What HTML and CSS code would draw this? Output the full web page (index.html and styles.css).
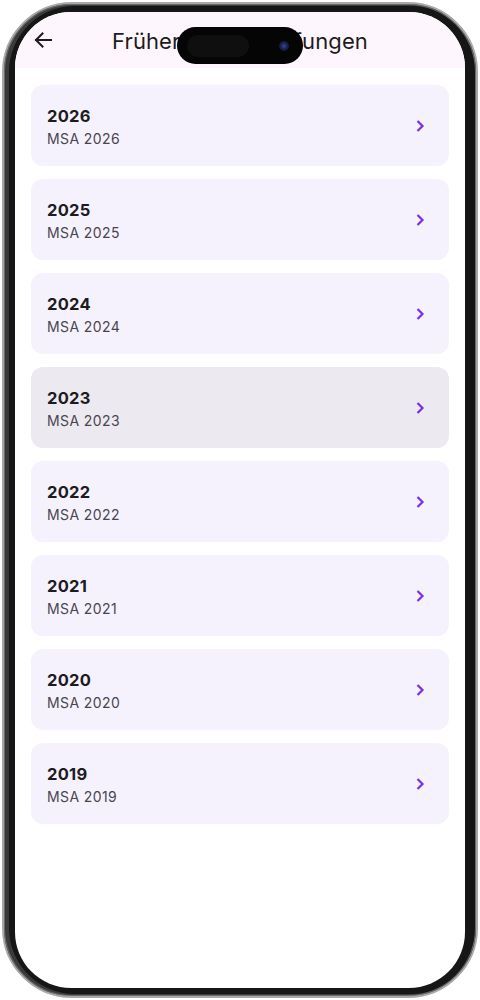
FILE: index.html
```html
<!DOCTYPE html>
<html lang="de">
<head>
<meta charset="utf-8">
<title>Frühere MSA-Prüfungen</title>
<link rel="stylesheet" href="styles.css">
</head>
<body>
<div class="phone">
  <div class="screen">
    <div class="island"><span class="island-dark"></span><span class="cam"></span></div>
    <header class="appbar">
      <span class="back">
        <svg width="20" height="20" viewBox="0 0 20 20"><path d="M18 10H3M9.5 3.5L3 10l6.5 6.5" fill="none" stroke="#1d1b20" stroke-width="2" stroke-linecap="square"/></svg>
      </span>
      <h1 class="title">Frühere MSA-Prüfungen</h1>
    </header>
    <ul class="list">
      <li class="card"><div class="txt"><span class="year">2026</span><span class="sub">MSA 2026</span></div><svg class="chev" width="10" height="14" viewBox="0 0 10 14"><path d="M2.5 2l5 5-5 5" fill="none" stroke="#7c2ee6" stroke-width="2.2"/></svg></li>
      <li class="card"><div class="txt"><span class="year">2025</span><span class="sub">MSA 2025</span></div><svg class="chev" width="10" height="14" viewBox="0 0 10 14"><path d="M2.5 2l5 5-5 5" fill="none" stroke="#7c2ee6" stroke-width="2.2"/></svg></li>
      <li class="card"><div class="txt"><span class="year">2024</span><span class="sub">MSA 2024</span></div><svg class="chev" width="10" height="14" viewBox="0 0 10 14"><path d="M2.5 2l5 5-5 5" fill="none" stroke="#7c2ee6" stroke-width="2.2"/></svg></li>
      <li class="card active"><div class="txt"><span class="year">2023</span><span class="sub">MSA 2023</span></div><svg class="chev" width="10" height="14" viewBox="0 0 10 14"><path d="M2.5 2l5 5-5 5" fill="none" stroke="#7c2ee6" stroke-width="2.2"/></svg></li>
      <li class="card"><div class="txt"><span class="year">2022</span><span class="sub">MSA 2022</span></div><svg class="chev" width="10" height="14" viewBox="0 0 10 14"><path d="M2.5 2l5 5-5 5" fill="none" stroke="#7c2ee6" stroke-width="2.2"/></svg></li>
      <li class="card"><div class="txt"><span class="year">2021</span><span class="sub">MSA 2021</span></div><svg class="chev" width="10" height="14" viewBox="0 0 10 14"><path d="M2.5 2l5 5-5 5" fill="none" stroke="#7c2ee6" stroke-width="2.2"/></svg></li>
      <li class="card"><div class="txt"><span class="year">2020</span><span class="sub">MSA 2020</span></div><svg class="chev" width="10" height="14" viewBox="0 0 10 14"><path d="M2.5 2l5 5-5 5" fill="none" stroke="#7c2ee6" stroke-width="2.2"/></svg></li>
      <li class="card"><div class="txt"><span class="year">2019</span><span class="sub">MSA 2019</span></div><svg class="chev" width="10" height="14" viewBox="0 0 10 14"><path d="M2.5 2l5 5-5 5" fill="none" stroke="#7c2ee6" stroke-width="2.2"/></svg></li>
    </ul>
  </div>
</div>
</body>
</html>
```
FILE: styles.css
```css
* { box-sizing: border-box; }
html, body { margin: 0; padding: 0; background: #ffffff; }
body { width: 480px; height: 1000px; padding: 2px; font-family: Inter, "Noto Sans", sans-serif; }

.phone {
  width: 476px;
  height: 996px;
  border-radius: 70px;
  background: #161616;
  padding: 8px 11px;
  border: 2px solid #a9a9a9;
  box-shadow: inset 0 0 0 1px #6a6a6a, inset 3px 0 0 2px #3a3a3a;
}

.screen {
  position: relative;
  width: 450px;
  height: 976px;
  border-radius: 56px;
  background: #ffffff;
  overflow: hidden;
}

.island {
  position: absolute;
  z-index: 5;
  left: 162px;
  top: 15px;
  width: 126px;
  height: 37px;
  border-radius: 19px;
  background: #050505;
  display: flex;
  align-items: center;
  padding: 0 10px;
}
.island-dark {
  width: 62px;
  height: 22px;
  border-radius: 11px;
  background: #0f0f10;
}
.cam {
  margin-left: auto;
  margin-right: 4px;
  width: 10px;
  height: 10px;
  border-radius: 50%;
  background: radial-gradient(circle at 50% 50%, #3a4a8a 0, #1b2250 45%, #0a0c1a 100%);
}

.appbar {
  height: 56px;
  background: #fdf7fd;
  display: flex;
  align-items: center;
  padding: 0 16px 0 18px;
  position: relative;
}
.back { display: flex; width: 20px; height: 20px; margin-top: 0; }
.title {
  position: absolute;
  left: 0; right: 0;
  top: 15px;
  margin: 0;
  text-align: center;
  font-size: 22px;
  line-height: 28px;
  font-weight: 400;
  color: #1d1b20;
  letter-spacing: 0.1px;
  white-space: nowrap;
  pointer-events: none;
}

.list {
  list-style: none;
  margin: 0;
  padding: 17px 16px 0;
  display: flex;
  flex-direction: column;
  gap: 13px;
}
.card {
  height: 81px;
  border-radius: 12px;
  background: #f5f2fd;
  display: flex;
  align-items: center;
  justify-content: space-between;
  padding: 0 24px 0 16px;
}
.card.active { background: #ece9f1; }
.txt { display: flex; flex-direction: column; gap: 4px; margin-top: 3px; }
.year { font-size: 16.5px; font-weight: 700; color: #1d1b20; line-height: 20px; letter-spacing: 0.3px; }
.sub { font-size: 14px; color: #49454f; line-height: 18px; letter-spacing: 0.4px; }
.chev { display: block; }
```
